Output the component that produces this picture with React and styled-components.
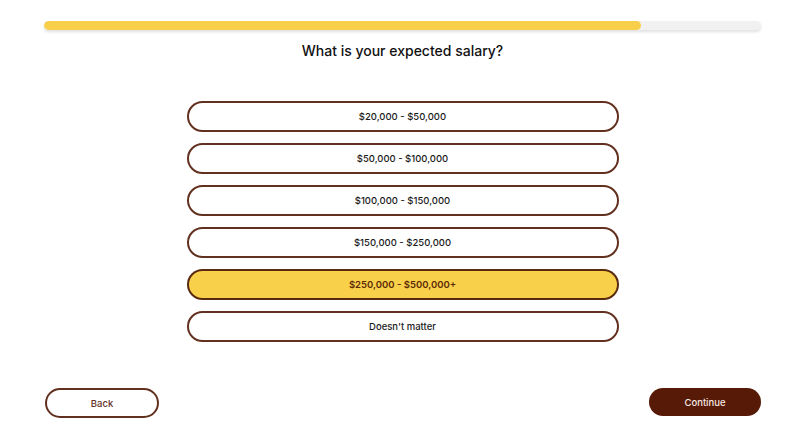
import React, { useState } from "react";
import styled, { createGlobalStyle } from "styled-components";

const Global = createGlobalStyle`
  html, body { margin: 0; padding: 0; background: #ffffff; }
  body { font-family: "Inter", "Noto Sans", sans-serif; color: #111; }
  * { box-sizing: border-box; }
`;

const Page = styled.div`
  width: 806px;
  height: 435px;
  padding: 21px 45px 0 44px;
  display: flex;
  flex-direction: column;
`;

const Track = styled.div`
  height: 9px;
  width: 100%;
  border-radius: 5px;
  background: #f1f1f1;
  box-shadow: 0 2px 3px rgba(0, 0, 0, 0.12);
  overflow: hidden;
`;

const Fill = styled.div`
  height: 100%;
  border-radius: 5px;
  background: #f8cf4a;
`;

const Title = styled.h1`
  margin: 11px 0 0;
  text-align: center;
  font-size: 14px;
  line-height: 20px;
  font-weight: 500;
  color: #111;
`;

const Options = styled.div`
  margin: 40px auto 0;
  width: 432px;
  display: flex;
  flex-direction: column;
  gap: 11px;
`;

const Option = styled.button`
  height: 31px;
  width: 100%;
  border-radius: 16px;
  border: 2px solid ${(p) => (p.$selected ? "#5a2a10" : "#62301f")};
  background: ${(p) => (p.$selected ? "#f9d04a" : "#ffffff")};
  color: ${(p) => (p.$selected ? "#5a2a08" : "#1a1a1a")};
  font-family: inherit;
  font-size: 9.5px;
  font-weight: ${(p) => (p.$selected ? 600 : 500)};
  cursor: pointer;
  padding: 0;
`;

const Footer = styled.div`
  margin-top: 46px;
  display: flex;
  justify-content: space-between;
  align-items: center;
`;

const BackButton = styled.button`
  margin-left: 1px;
  width: 114px;
  height: 30px;
  border-radius: 15px;
  border: 2px solid #62301f;
  background: #fff;
  color: #62301f;
  font-family: inherit;
  font-size: 9.5px;
  font-weight: 500;
  cursor: pointer;
`;

const ContinueButton = styled.button`
  width: 112px;
  height: 28px;
  border-radius: 14px;
  border: none;
  background: #561a07;
  color: #f5e8e0;
  font-family: inherit;
  font-size: 9.5px;
  font-weight: 500;
  cursor: pointer;
  margin-top: -2px;
`;

const choices = [
  "$20,000 - $50,000",
  "$50,000 - $100,000",
  "$100,000 - $150,000",
  "$150,000 - $250,000",
  "$250,000 - $500,000+",
  "Doesn't matter",
];

export default function App() {
  const [sel, setSel] = useState(4);
  return (
    <>
      <Global />
      <Page>
        <Track>
          <Fill style={{ width: "83.3%" }} />
        </Track>
        <Title>What is your expected salary?</Title>
        <Options>
          {choices.map((c, i) => (
            <Option key={c} $selected={i === sel} onClick={() => setSel(i)}>
              {c}
            </Option>
          ))}
        </Options>
        <Footer>
          <BackButton>Back</BackButton>
          <ContinueButton>Continue</ContinueButton>
        </Footer>
      </Page>
    </>
  );
}
